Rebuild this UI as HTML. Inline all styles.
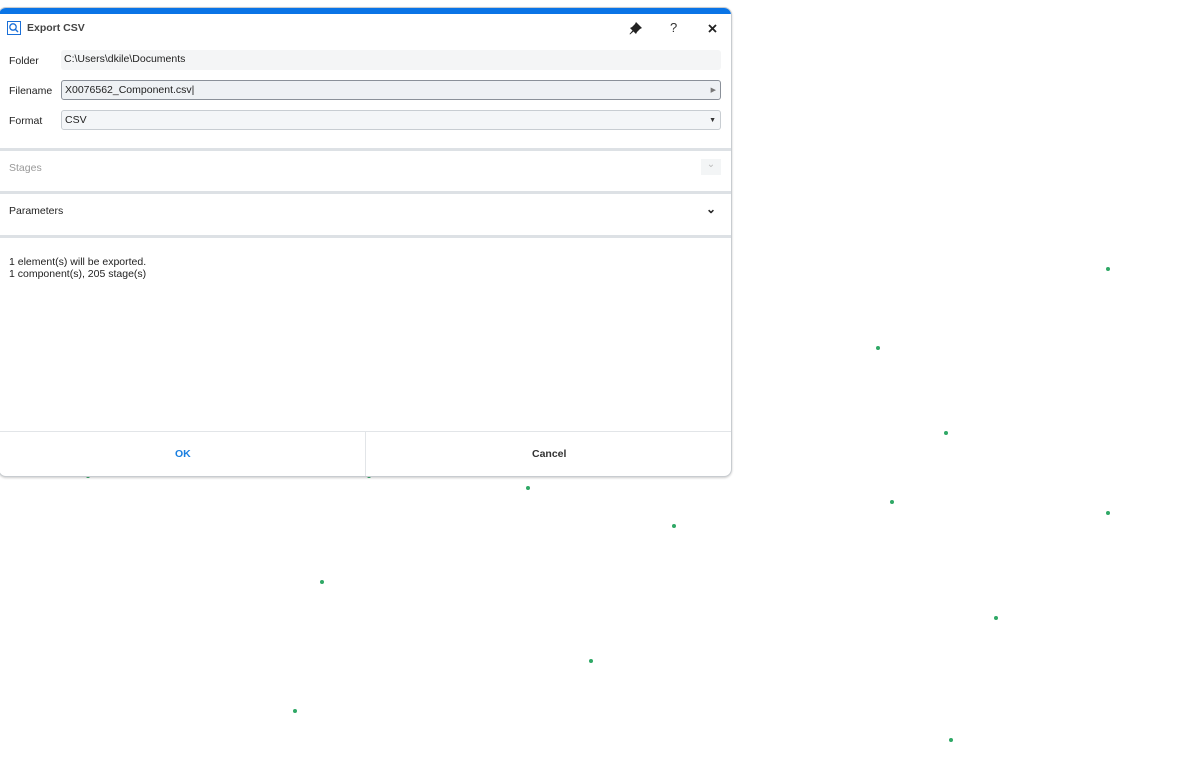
<!DOCTYPE html>
<html><head><style>
body{margin:0;width:1200px;height:760px;background:#fff;position:relative;font-family:"Liberation Sans",sans-serif;font-size:10.5px;color:#222;overflow:hidden}
.dot{position:absolute;width:4px;height:4px;border-radius:50%;background:#2fa866}
.dlg{position:absolute;left:-2px;top:7px;width:732px;height:468px;border:1px solid #c8ccd0;border-radius:8px;background:#fff;overflow:hidden;box-shadow:0 1px 2px rgba(0,0,0,.2)}
.top{height:6px;background:#0a74e6}
.lbl{position:absolute;left:10px}
.fld{position:absolute;left:62px;width:660px;height:20px;box-sizing:border-box;border-radius:3px;padding-left:3px;line-height:19px}
.sep{position:absolute;left:0;width:732px;height:3px;background:#dde1e5}
</style></head><body>
<div class="dot" style="left:1106px;top:267px"></div>
<div class="dot" style="left:876px;top:346px"></div>
<div class="dot" style="left:944px;top:431px"></div>
<div class="dot" style="left:890px;top:500px"></div>
<div class="dot" style="left:1106px;top:511px"></div>
<div class="dot" style="left:526px;top:486px"></div>
<div class="dot" style="left:672px;top:524px"></div>
<div class="dot" style="left:320px;top:580px"></div>
<div class="dot" style="left:994px;top:616px"></div>
<div class="dot" style="left:589px;top:659px"></div>
<div class="dot" style="left:293px;top:709px"></div>
<div class="dot" style="left:949px;top:738px"></div>
<div class="dot" style="left:86px;top:474px"></div>
<div class="dot" style="left:367px;top:474px"></div>
<div class="dlg">
<div class="top"></div>
<svg style="position:absolute;left:8px;top:13px" width="14" height="14"><rect x="0.5" y="0.5" width="13" height="13" fill="none" stroke="#1a6fd8"/><circle cx="6" cy="6" r="3.2" fill="none" stroke="#1a6fd8" stroke-width="1.3"/><line x1="8.5" y1="8.5" x2="11" y2="11" stroke="#1a6fd8" stroke-width="1.4"/></svg>
<div style="position:absolute;left:28px;top:14px;font-weight:bold;color:#444">Export CSV</div>
<svg style="position:absolute;left:630px;top:13px" width="14" height="14"><path d="M7 1 L13 7 L11 8 L8 11 L7 13 L4.5 10.5 L1 13.5 L0.5 13 L3.5 9.5 L1 7 L3 6 L6 3 Z" fill="#222"/></svg>
<div style="position:absolute;left:671px;top:12px;font-size:13px;color:#333">?</div>
<svg style="position:absolute;left:709px;top:16px" width="9" height="9"><path d="M1 1 L8 8 M8 1 L1 8" stroke="#222" stroke-width="1.8"/></svg>
<div class="lbl" style="top:47px">Folder</div>
<div class="fld" style="top:42px;background:#f4f5f6">C:\Users\dkile\Documents</div>
<div class="lbl" style="top:77px">Filename</div>
<div class="fld" style="top:72px;background:#eef1f4;border:1px solid #8a9099">X0076562_Component.csv|<span style="position:absolute;right:4px;top:0;font-size:7px;color:#777">▶</span></div>
<div class="lbl" style="top:107px">Format</div>
<div class="fld" style="top:102px;background:#f4f6f8;border:1px solid #c8cdd2">CSV<span style="position:absolute;right:4px;top:0;font-size:7px;color:#333">▼</span></div>
<div class="sep" style="top:140px"></div>
<div class="lbl" style="top:154px;color:#999">Stages</div>
<div style="position:absolute;left:702px;top:151px;width:20px;height:16px;background:#f3f5f6;color:#bbb;text-align:center;font-size:10px">⌄</div>
<div class="sep" style="top:183px"></div>
<div class="lbl" style="top:197px">Parameters</div>
<div style="position:absolute;left:707px;top:194px;font-size:12px;font-weight:bold">⌄</div>
<div class="sep" style="top:227px"></div>
<div class="lbl" style="top:248px;line-height:12px">1 element(s) will be exported.<br>1 component(s), 205 stage(s)</div>
<div style="position:absolute;left:0;top:423px;width:732px;height:1px;background:#e2e5e8"></div>
<div style="position:absolute;left:366px;top:423px;width:1px;height:45px;background:#e2e5e8"></div>
<div style="position:absolute;left:176px;top:440px;color:#1a7fe0;font-weight:bold">OK</div>
<div style="position:absolute;left:533px;top:440px;font-weight:bold;color:#333">Cancel</div>
</div>
</body></html>
